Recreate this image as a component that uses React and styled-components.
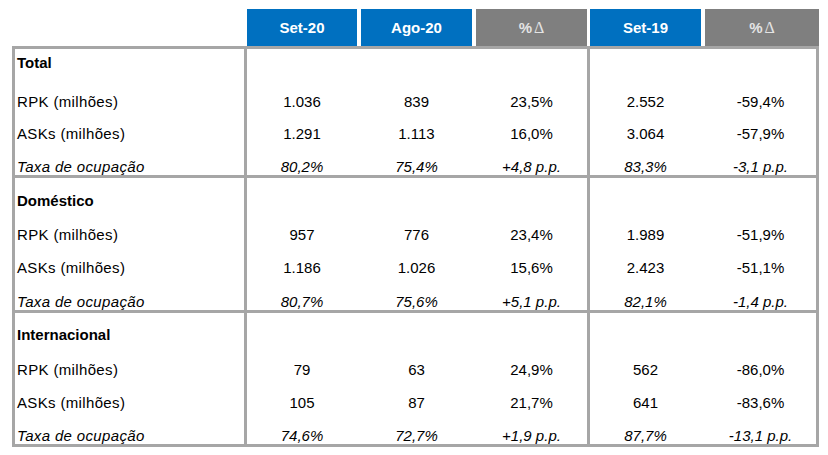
import React from "react";
import styled, { createGlobalStyle } from "styled-components";

const GlobalStyle = createGlobalStyle`
  body {
    margin: 0;
    background: #fff;
    font-family: "Liberation Sans", Arial, sans-serif;
    color: #000;
  }
`;

const Page = styled.div`
  padding: 9px 0 0 12px;
  width: 807px;
`;

const HeaderRow = styled.div`
  display: flex;
  height: 37px;
  padding-left: 235px;
`;

const HeadCell = styled.div`
  width: ${p => p.w}px;
  margin-left: ${p => p.gap || 0}px;
  background: ${p => (p.grey ? "#7f7f7f" : "#0070c0")};
  color: ${p => (p.grey ? "#e4e4e4" : "#fff")};
  font-weight: bold;
  font-size: 15px;
  display: flex;
  align-items: center;
  justify-content: center;
`;

const Delta = styled.span`
  font-family: "Liberation Serif", "Times New Roman", serif;
  font-weight: normal;
  font-size: 16px;
  margin-left: 2px;
`;

const Table = styled.div`
  box-sizing: border-box;
  width: 807px;
  border: 3px solid #a6a6a6;
`;

const Group = styled.div`
  & + & {
    border-top: 3px solid #a6a6a6;
  }
`;

const Row = styled.div`
  display: grid;
  grid-template-columns: 232px 114px 115px 114px 115px 111px;
  height: ${p => p.h}px;
  font-size: 15px;
  line-height: 17px;
  font-style: ${p => (p.italic ? "italic" : "normal")};
`;

const Label = styled.div`
  border-right: 3px solid #a6a6a6;
  padding-left: 2px;
  display: flex;
  align-items: flex-end;
  letter-spacing: ${p => (p.bold ? "0" : "0.35px")};
  font-weight: ${p => (p.bold ? "bold" : "normal")};
`;

const Value = styled.div`
  display: flex;
  align-items: flex-end;
  justify-content: center;
  padding-right: ${p => (p.pad ? 4 : 0)}px;
  border-right: ${p => (p.sep ? "3px solid #a6a6a6" : "none")};
`;

const headers = [
  { label: "Set-20", w: 110 },
  { label: "Ago-20", w: 111, gap: 4 },
  { label: "%", w: 111, gap: 4, grey: true },
  { label: "Set-19", w: 111, gap: 3 },
  { label: "%", w: 114, gap: 4, grey: true },
];

const groups = [
  {
    title: "Total",
    heights: [22, 39, 32, 33],
    rows: [
      ["RPK (milhões)", "1.036", "839", "23,5%", "2.552", "-59,4%"],
      ["ASKs (milhões)", "1.291", "1.113", "16,0%", "3.064", "-57,9%"],
      ["Taxa de ocupação", "80,2%", "75,4%", "+4,8 p.p.", "83,3%", "-3,1 p.p."],
    ],
  },
  {
    title: "Doméstico",
    heights: [31, 34, 33, 34],
    rows: [
      ["RPK (milhões)", "957", "776", "23,4%", "1.989", "-51,9%"],
      ["ASKs (milhões)", "1.186", "1.026", "15,6%", "2.423", "-51,1%"],
      ["Taxa de ocupação", "80,7%", "75,6%", "+5,1 p.p.", "82,1%", "-1,4 p.p."],
    ],
  },
  {
    title: "Internacional",
    heights: [30, 35, 33, 33],
    rows: [
      ["RPK (milhões)", "79", "63", "24,9%", "562", "-86,0%"],
      ["ASKs (milhões)", "105", "87", "21,7%", "641", "-83,6%"],
      ["Taxa de ocupação", "74,6%", "72,7%", "+1,9 p.p.", "87,7%", "-13,1 p.p."],
    ],
  },
];

const DataRow = ({ h, cells, italic }) => (
  <Row h={h} italic={italic}>
    <Label>{cells[0]}</Label>
    <Value pad>{cells[1]}</Value>
    <Value pad>{cells[2]}</Value>
    <Value sep>{cells[3]}</Value>
    <Value pad>{cells[4]}</Value>
    <Value>{cells[5]}</Value>
  </Row>
);

export default function App() {
  return (
    <Page>
      <GlobalStyle />
      <HeaderRow>
        {headers.map((h, i) => (
          <HeadCell key={i} w={h.w} gap={h.gap} grey={h.grey}>
            {h.label}
            {h.grey && <Delta>Δ</Delta>}
          </HeadCell>
        ))}
      </HeaderRow>
      <Table>
        {groups.map(g => (
          <Group key={g.title}>
            <Row h={g.heights[0]}>
              <Label bold>{g.title}</Label>
              <Value pad />
              <Value pad />
              <Value sep />
              <Value pad />
              <Value />
            </Row>
            {g.rows.map((r, i) => (
              <DataRow key={i} h={g.heights[i + 1]} cells={r} italic={i === 2} />
            ))}
          </Group>
        ))}
      </Table>
    </Page>
  );
}
